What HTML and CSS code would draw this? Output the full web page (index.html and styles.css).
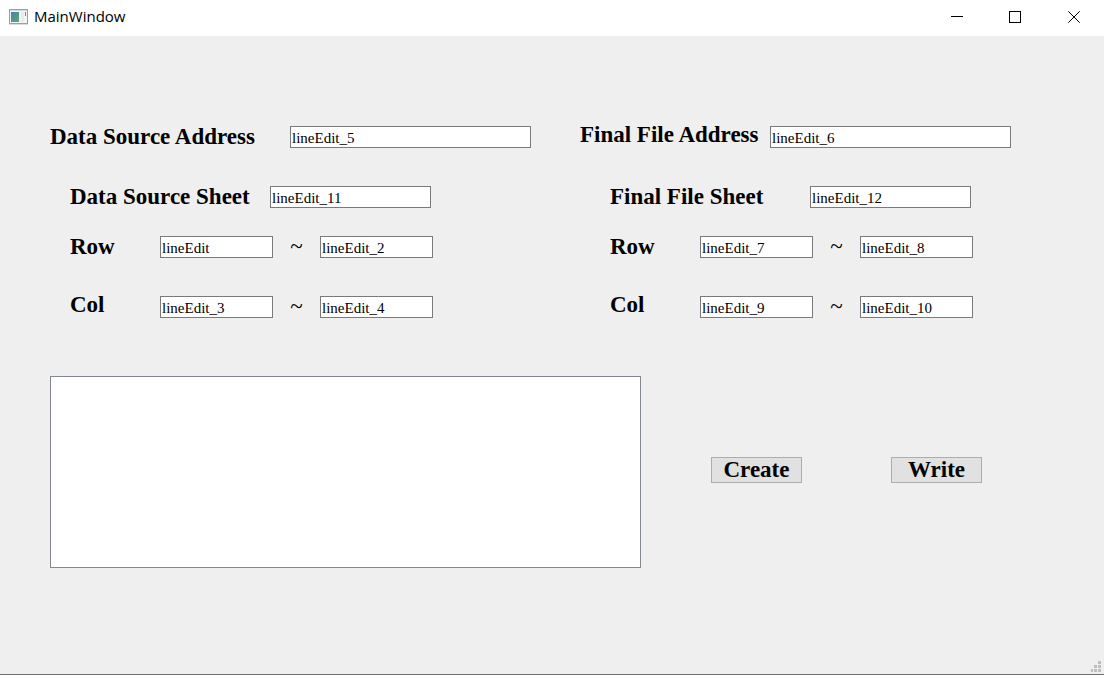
FILE: index.html
```html
<!DOCTYPE html>
<html lang="en">
<head>
<meta charset="utf-8">
<title>MainWindow</title>
<link rel="stylesheet" href="styles.css">
</head>
<body>
<div class="window">
  <header class="titlebar">
    <svg class="app-icon" width="19" height="16" viewBox="0 0 19 16" aria-hidden="true">
      <defs>
        <linearGradient id="pane" x1="0" y1="0" x2="1" y2="1">
          <stop offset="0" stop-color="#4a86a8"/>
          <stop offset="1" stop-color="#55a878"/>
        </linearGradient>
      </defs>
      <rect x="0.5" y="0.5" width="18" height="14" fill="#f3f4f5" stroke="#9a9ea6"/>
      <rect x="0" y="15" width="19" height="1" fill="#dcdcdc"/>
      <rect x="1" y="1" width="17" height="1" fill="#d5d9e0"/>
      <rect x="2" y="3" width="8" height="10" fill="url(#pane)"/>
      <rect x="12" y="3" width="3" height="10" fill="#e9ebee"/>
      <rect x="16" y="3" width="1" height="4" fill="#4d9a8c"/>
    </svg>
    <h1 class="title">MainWindow</h1>
    <button class="caption-button" type="button" aria-label="Minimize">
      <svg width="13" height="14" viewBox="0 0 13 14"><path d="M1 5.5H13" stroke="#000"/></svg>
    </button>
    <button class="caption-button" type="button" aria-label="Maximize">
      <svg width="13" height="14" viewBox="0 0 13 14"><rect x="0.5" y="0.5" width="11" height="11" fill="none" stroke="#000"/></svg>
    </button>
    <button class="caption-button" type="button" aria-label="Close">
      <svg width="13" height="14" viewBox="0 0 13 14"><path d="M0.3 0.3L11.7 11.7M11.7 0.3L0.3 11.7" stroke="#000"/></svg>
    </button>
  </header>

  <main class="content">
    <form class="form">
      <section class="group">
        <div class="row row-address">
          <label class="label label-source" for="e5">Data Source Address</label>
          <input class="field field-long" id="e5" type="text" value="lineEdit_5">
        </div>
        <div class="row row-sheet">
          <label class="label label-source-sheet" for="e11">Data Source Sheet</label>
          <input class="field field-medium" id="e11" type="text" value="lineEdit_11">
        </div>
        <div class="row row-range">
          <label class="label label-range" for="e1">Row</label>
          <input class="field field-short" id="e1" type="text" value="lineEdit">
          <label class="tilde" for="e2">~</label>
          <input class="field field-short" id="e2" type="text" value="lineEdit_2">
        </div>
        <div class="row row-range">
          <label class="label label-range label-top" for="e3">Col</label>
          <input class="field field-short" id="e3" type="text" value="lineEdit_3">
          <label class="tilde" for="e4">~</label>
          <input class="field field-short" id="e4" type="text" value="lineEdit_4">
        </div>
      </section>

      <section class="group">
        <div class="row row-address">
          <label class="label label-final label-top" for="e6">Final File Address</label>
          <input class="field field-long" id="e6" type="text" value="lineEdit_6">
        </div>
        <div class="row row-sheet row-inset">
          <label class="label label-final-sheet" for="e12">Final File Sheet</label>
          <input class="field field-medium" id="e12" type="text" value="lineEdit_12">
        </div>
        <div class="row row-range row-inset">
          <label class="label label-range" for="e7">Row</label>
          <input class="field field-short" id="e7" type="text" value="lineEdit_7">
          <label class="tilde" for="e8">~</label>
          <input class="field field-short" id="e8" type="text" value="lineEdit_8">
        </div>
        <div class="row row-range row-inset">
          <label class="label label-range label-top" for="e9">Col</label>
          <input class="field field-short" id="e9" type="text" value="lineEdit_9">
          <label class="tilde" for="e10">~</label>
          <input class="field field-short" id="e10" type="text" value="lineEdit_10">
        </div>
      </section>
    </form>

    <div class="output">
      <textarea class="log" rows="10" aria-label="Output"></textarea>
      <div class="actions">
        <button class="action" type="button">Create</button>
        <button class="action" type="button">Write</button>
      </div>
    </div>
  </main>

  <footer class="statusbar">
    <svg width="10" height="11" viewBox="0 0 10 11" fill="#bfbfbf" aria-hidden="true">
      <path d="M7 0h3v3h-3zM3 4h3v3h-3zM7 4h3v3h-3zM0 8h2v3h-2zM3 8h3v3h-3zM7 8h3v3h-3z"/>
    </svg>
  </footer>
</div>
</body>
</html>
```

FILE: styles.css
```css
* {
  box-sizing: border-box;
}

body {
  margin: 0;
  background: #efefef;
  color: #000;
  font-family: "Liberation Serif", "Times New Roman", serif;
}

.window {
  display: flex;
  flex-direction: column;
  min-height: 100vh;
  border-bottom: 1px solid #6e6e6e;
}

.titlebar {
  display: flex;
  align-items: center;
  height: 36px;
  padding-left: 9px;
  background: #fff;
}

.app-icon {
  margin: 0 6px 2px 0;
}

.title {
  flex: 1;
  margin: 0;
  padding-bottom: 4px;
  font: 400 15px/20px "Open Sans", "Segoe UI", sans-serif;
}

.caption-button {
  display: flex;
  align-items: center;
  justify-content: center;
  width: 59px;
  height: 36px;
  padding: 0;
  border: 0;
  background: none;
}

.content {
  flex: 1;
  padding: 90px 50px 0;
}

.form {
  display: grid;
  grid-template-columns: 530fr 474fr;
}

.row {
  display: flex;
  align-items: center;
  height: 22px;
}

.row-address {
  margin-bottom: 38px;
}

.row-sheet {
  margin-bottom: 28px;
}

.row-range {
  margin-bottom: 38px;
}

.row-sheet,
.row-range {
  padding-left: 20px;
}

.row-inset {
  padding-left: 30px;
}

.label {
  flex: none;
  font-size: 23px;
  font-weight: 700;
  line-height: 18px;
  white-space: nowrap;
}

.label-top {
  align-self: flex-start;
}

.label-source {
  width: 240px;
}

.label-source-sheet,
.label-final-sheet {
  width: 200px;
}

.label-final {
  width: 190px;
}

.label-range {
  width: 90px;
}

.tilde {
  width: 47px;
  font-size: 23px;
  line-height: 18px;
  text-align: center;
}

.field {
  height: 22px;
  padding: 2px 1px 0;
  border: 1px solid #7a7a7a;
  border-radius: 0;
  background: #fff;
  color: #000;
  font: 400 15px/18px "Liberation Serif", "Times New Roman", serif;
}

.field-long {
  width: 241px;
}

.field-medium {
  width: 161px;
}

.field-short {
  width: 113px;
}

.output {
  display: flex;
  align-items: center;
  gap: 70px;
  margin-top: 20px;
  padding-right: 72px;
}

.log {
  flex: 1;
  min-width: 0;
  height: 192px;
  border: 1px solid #828790;
  border-radius: 0;
  background: #fff;
  resize: none;
}

.actions {
  display: flex;
  gap: 89px;
  padding-bottom: 4px;
}

.action {
  width: 91px;
  height: 26px;
  padding: 0;
  border: 1px solid #adadad;
  background: #e1e1e1;
  color: #000;
  font: 700 23px/24px "Liberation Serif", "Times New Roman", serif;
}

.statusbar {
  display: flex;
  justify-content: flex-end;
  padding: 0 3px 2px;
}
```
